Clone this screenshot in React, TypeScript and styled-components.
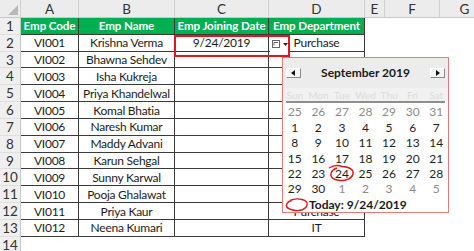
import React from "react";
import styled, { createGlobalStyle } from "styled-components";

const Global = createGlobalStyle`
  html, body { margin: 0; padding: 0; background: #fff; }
  body { font-family: Lato, "Liberation Sans", sans-serif; }
`;

const Page = styled.div`
  position: relative;
  width: 474px;
  height: 251px;
  overflow: hidden;
  background: #fff;
`;

const Sheet = styled.div`
  display: grid;
  grid-template-columns: 21px 58px 96px 94px 96px 20px 55px 50px;
  grid-template-rows: 18px repeat(14, 16.83px);
  width: 490px;
`;

type Kind = "corner" | "colHead" | "rowHead" | "th" | "td" | "blank";

const Cell = styled.div<{ $kind: Kind }>`
  box-sizing: border-box;
  display: flex;
  align-items: center;
  justify-content: center;
  white-space: nowrap;
  overflow: hidden;
  font-size: 12px;
  color: #1c1c1c;
  ${({ $kind }) =>
    $kind === "corner"
      ? `background:#ececec; border-right:1px solid #d0d0d0; border-bottom:1px solid #c8c8c8; position:relative;`
      : $kind === "colHead"
      ? `background:#ececec; border-right:1px solid #d0d0d0; border-bottom:1px solid #c8c8c8; color:#333; font-size:13.5px;`
      : $kind === "rowHead"
      ? `background:#efefef; border-right:1px solid #c8c8c8; border-bottom:1px solid #dedede; color:#333; font-size:13.5px; overflow:visible;`
      : $kind === "th"
      ? `background:#00b050; color:#fff; font-weight:700; font-size:11.6px; letter-spacing:-0.1px; border-right:1px solid #3a3a3a; border-bottom:1px solid #3a3a3a;`
      : $kind === "td"
      ? `background:#fff; letter-spacing:-0.25px; border-right:1px solid #3a3a3a; border-bottom:1px solid #3a3a3a;`
      : `background:#fff;`}
`;

const CornerTri = styled.div`
  position: absolute;
  right: 2px;
  bottom: 2px;
  width: 0;
  height: 0;
  border-left: 10px solid transparent;
  border-bottom: 10px solid #b9b9b9;
`;

const RedBox = styled.div`
  position: absolute;
  left: 174px;
  top: 35px;
  width: 116px;
  height: 22px;
  box-sizing: border-box;
  border: 2.5px solid #e3161e;
`;

const DropControl = styled.div`
  position: absolute;
  left: 270px;
  top: 36px;
  width: 20px;
  height: 16px;
  box-sizing: border-box;
  background: #fff;
  border-right: 1px solid #555;
  display: flex;
  align-items: center;
  justify-content: center;
`;

const Popup = styled.div`
  position: absolute;
  left: 282px;
  top: 57px;
  width: 167px;
  height: 156px;
  box-sizing: border-box;
  border: 1px solid #e77a7a;
  background: #fff;
  display: flex;
  flex-direction: column;
`;

const NavBar = styled.div`
  height: 31px;
  background: #ececec;
  display: flex;
  align-items: center;
  justify-content: space-between;
  padding: 0 3px;
`;

const NavButton = styled.div`
  width: 15px;
  height: 10px;
  box-sizing: border-box;
  background: #f4f4f4;
  border-top: 1px solid #fff;
  border-left: 1px solid #fff;
  border-right: 1px solid #8a8a8a;
  border-bottom: 1px solid #8a8a8a;
  display: flex;
  align-items: center;
  justify-content: center;
`;

const Month = styled.div`
  font-weight: 700;
  font-size: 12px;
  color: #1a1a1a;
`;

const WeekRow = styled.div`
  height: 14px;
  background: #f1f1f1;
  display: grid;
  grid-template-columns: repeat(7, 1fr);
  align-items: center;
  font-size: 10px;
  color: #dcdcdc;
  text-align: center;
`;

const Divider = styled.div`
  height: 2px;
  margin: 0 3px;
  background: #8e8e8e;
`;

const Days = styled.div`
  display: grid;
  grid-template-columns: repeat(7, 1fr);
  grid-auto-rows: 15.4px;
  padding-top: 1px;
`;

const Day = styled.div<{ $other?: boolean }>`
  display: flex;
  align-items: center;
  justify-content: center;
  font-size: 12px;
  color: ${({ $other }) => ($other ? "#8c8c8c" : "#1e1e1e")};
`;

const TodayRow = styled.div`
  height: 16px;
  display: flex;
  align-items: center;
  padding-left: 26px;
  font-size: 12px;
  font-weight: 700;
  color: #1a1a1a;
`;

const Marks = styled.svg`
  position: absolute;
  left: 0;
  top: 0;
  pointer-events: none;
`;

const cols = ["A", "B", "C", "D", "E", "F", "G"];
const names = [
  "Krishna Verma",
  "Bhawna Sehdev",
  "Isha Kukreja",
  "Priya Khandelwal",
  "Komal Bhatia",
  "Naresh Kumar",
  "Maddy Advani",
  "Karun Sehgal",
  "Sunny Karwal",
  "Pooja Ghalawat",
  "Priya Kaur",
  "Neena Kumari",
];
const depts = ["Purchase", "", "", "", "", "", "", "", "", "", "Purchase", "IT"];

const days: { n: number; other?: boolean }[] = [
  ...[25, 26, 27, 28, 29, 30, 31].map((n) => ({ n, other: true })),
  ...Array.from({ length: 30 }, (_, i) => ({ n: i + 1 })),
  ...[1, 2, 3, 4, 5].map((n) => ({ n, other: true })),
];

export default function App() {
  const rows: React.ReactNode[] = [];
  rows.push(
    <Cell key="corner" $kind="corner">
      <CornerTri />
    </Cell>
  );
  cols.forEach((c) =>
    rows.push(
      <Cell key={"h" + c} $kind="colHead">
        {c}
      </Cell>
    )
  );
  for (let r = 1; r <= 14; r++) {
    rows.push(
      <Cell key={"r" + r} $kind="rowHead">
        {r}
      </Cell>
    );
    if (r === 1) {
      ["Emp Code", "Emp Name", "Emp Joining Date", "Emp Department"].forEach((t) =>
        rows.push(
          <Cell key={"th" + t} $kind="th">
            {t}
          </Cell>
        )
      );
    } else if (r <= 13) {
      const i = r - 2;
      rows.push(
        <Cell key={"a" + r} $kind="td">
          {"VI" + String(i + 1).padStart(3, "0")}
        </Cell>
      );
      rows.push(
        <Cell key={"b" + r} $kind="td">
          {names[i]}
        </Cell>
      );
      rows.push(
        <Cell key={"c" + r} $kind="td">
          {r === 2 ? "9/24/2019" : ""}
        </Cell>
      );
      rows.push(
        <Cell key={"d" + r} $kind="td">
          {depts[i]}
        </Cell>
      );
    } else {
      for (let k = 0; k < 4; k++) rows.push(<Cell key={"x" + r + k} $kind="blank" />);
    }
    for (let k = 0; k < 3; k++) rows.push(<Cell key={"e" + r + k} $kind="blank" />);
  }

  return (
    <Page>
      <Global />
      <Sheet>{rows}</Sheet>
      <DropControl>
        <svg width="18" height="12" viewBox="0 0 18 12">
          <rect x="1.5" y="2.5" width="7" height="7" fill="#fff" stroke="#666" strokeWidth="1" />
          <path d="M3 4.5h4M3 4.5v3" stroke="#666" strokeWidth="1" fill="none" />
          <path d="M12 5h5l-2.5 3z" fill="#222" />
        </svg>
      </DropControl>
      <RedBox />
      <Popup>
        <NavBar>
          <NavButton>
            <svg width="5" height="6" viewBox="0 0 5 6">
              <path d="M4 0v6L0 3z" fill="#111" />
            </svg>
          </NavButton>
          <Month>September 2019</Month>
          <NavButton>
            <svg width="5" height="6" viewBox="0 0 5 6">
              <path d="M1 0v6l4-3z" fill="#111" />
            </svg>
          </NavButton>
        </NavBar>
        <WeekRow>
          {["Sun", "Mon", "Tue", "Wed", "Thu", "Fri", "Sat"].map((d) => (
            <span key={d}>{d}</span>
          ))}
        </WeekRow>
        <Divider />
        <Days>
          {days.map((d, i) => (
            <Day key={i} $other={d.other}>
              {d.n}
            </Day>
          ))}
        </Days>
        <TodayRow>Today: 9/24/2019</TodayRow>
      </Popup>
      <Marks width="474" height="251" viewBox="0 0 474 251">
        <path
          d="M329 168 C333 165.5 338 165 342 166.5 C350 167 354 170 353 174 C352 178.5 346 181 340 180.5 C334 180 330 177.5 331 173.5 C331.5 171 334 169 337 168"
          fill="none"
          stroke="#e3161e"
          strokeWidth="1.4"
        />
        <path
          d="M290 200.5 C293 199 298 198.5 302 199.5 C306 200.5 308 202.5 307 205.5 C306 209 301 211 295.5 210.5 C290 210 286 208 286.5 205 C287 202.5 289.5 201 292 200.5"
          fill="none"
          stroke="#e3161e"
          strokeWidth="1.4"
        />
      </Marks>
    </Page>
  );
}
